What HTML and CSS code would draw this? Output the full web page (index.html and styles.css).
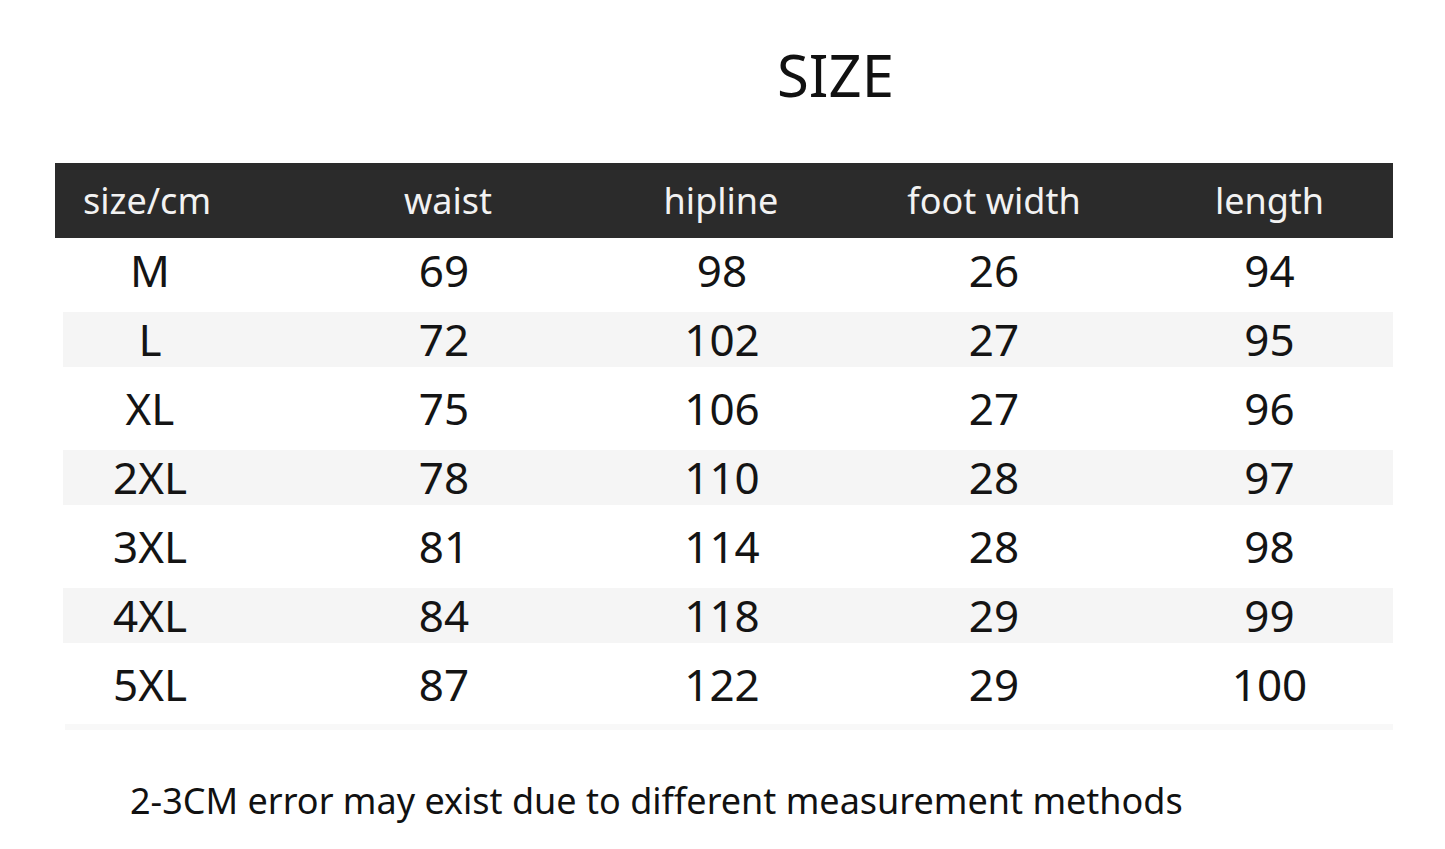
FILE: index.html
```html
<!DOCTYPE html>
<html lang="en">
<head>
<meta charset="utf-8">
<title>SIZE</title>
<link rel="stylesheet" href="styles.css">
</head>
<body>
<main class="page">
  <h1 class="title">SIZE</h1>
  <div class="chart">
    <div class="row head">
      <div class="cell first">size/cm</div>
      <div class="cell">waist</div>
      <div class="cell">hipline</div>
      <div class="cell">foot width</div>
      <div class="cell">length</div>
    </div>
    <div class="row"><div class="cell first">M</div><div class="cell">69</div><div class="cell">98</div><div class="cell">26</div><div class="cell">94</div></div>
    <div class="row alt"><div class="cell first">L</div><div class="cell">72</div><div class="cell">102</div><div class="cell">27</div><div class="cell">95</div></div>
    <div class="row"><div class="cell first">XL</div><div class="cell">75</div><div class="cell">106</div><div class="cell">27</div><div class="cell">96</div></div>
    <div class="row alt"><div class="cell first">2XL</div><div class="cell">78</div><div class="cell">110</div><div class="cell">28</div><div class="cell">97</div></div>
    <div class="row"><div class="cell first">3XL</div><div class="cell">81</div><div class="cell">114</div><div class="cell">28</div><div class="cell">98</div></div>
    <div class="row alt"><div class="cell first">4XL</div><div class="cell">84</div><div class="cell">118</div><div class="cell">29</div><div class="cell">99</div></div>
    <div class="row"><div class="cell first">5XL</div><div class="cell">87</div><div class="cell">122</div><div class="cell">29</div><div class="cell">100</div></div>
  </div>
  <p class="note">2-3CM error may exist due to different measurement methods</p>
</main>
</body>
</html>
```

FILE: styles.css
```css
html, body {
  margin: 0;
  padding: 0;
  background: #ffffff;
}

body {
  width: 1445px;
  height: 849px;
  overflow: hidden;
  font-family: "Noto Sans", "Open Sans", sans-serif;
  color: #141414;
}

.page {
  display: flex;
  flex-direction: column;
  padding-top: 35px;
}

.title {
  margin: 0 0 0 777px;
  font-size: 58px;
  line-height: 80px;
  font-weight: 400;
  color: #111111;
}

.chart {
  margin: 48px 0 0 55px;
  width: 1338px;
  display: flex;
  flex-direction: column;
}

.chart::after {
  content: "";
  display: block;
  height: 6px;
  margin: 12px 0 0 10px;
  background: #f8f8f8;
}

.row {
  display: grid;
  grid-template-columns: 241px 296px 250px 304px 247px;
  height: 55px;
  line-height: 55px;
  font-size: 44px;
  margin-top: 14px;
}

.row .cell {
  text-align: center;
  white-space: nowrap;
}

.row .cell.first {
  padding-right: 51px;
}

.row .cell:nth-child(3) {
  padding-left: 10px;
}

.row.head {
  margin-top: 0;
  height: 75px;
  line-height: 76px;
  font-size: 36px;
  background: #2b2b2b;
  color: #f2f2f2;
  grid-template-columns: 241px 304px 242px 304px 247px;
  margin-bottom: -8px;
}

.row.head .cell.first {
  padding-right: 57px;
}

.row.head .cell:nth-child(3) {
  padding-left: 0;
}

.row.head + .row {
  margin-top: 13px;
}

.row.alt {
  background: linear-gradient(to right, transparent 8px, #f5f5f5 8px);
}

.note {
  margin: 46px 0 0 130px;
  font-size: 36px;
  line-height: 50px;
  color: #111111;
}
```
